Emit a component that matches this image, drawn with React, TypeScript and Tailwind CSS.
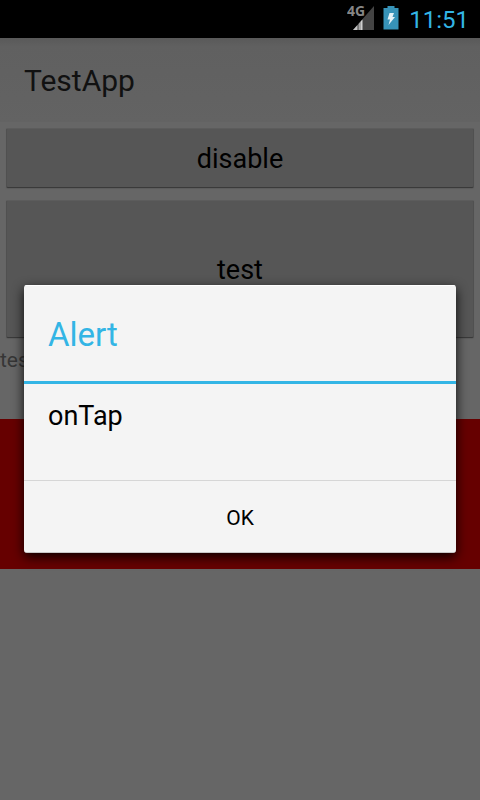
import { useState } from "react";

function SignalIcon() {
  return (
    <svg className="h-7 w-7" viewBox="0 -4 28 28" role="img" aria-label="4G signal">
      <path d="M27 0V24H6Z" fill="#444444" />
      <path d="M6 24 10.500 19V24Z" fill="#c4c4c4" />
      <path d="M11.500 18 14 15V24H11.500Z" fill="#a5a5a5" />
      <path d="M14 15 15.500 13.500V24H14Z" fill="#d0d0d0" />
      <text
        x="0"
        y="10"
        fontSize="14"
        fontWeight="700"
        fill="#868686"
        className="font-['Liberation_Sans_Narrow','Open_Sans',sans-serif]"
      >
        4G
      </text>
    </svg>
  );
}

function BatteryIcon() {
  return (
    <svg className="h-6 w-4" viewBox="0 0 16 24" role="img" aria-label="Battery charging">
      <path d="M4.500 0H11.500V2H15.500V23.500H0.500V2H4.500Z" fill="#3793b8" />
      <path d="M6.500 7H11L9.500 11H12L5.500 19L7 13.500H4.500Z" fill="#e4f2f7" />
    </svg>
  );
}

function StatusBar() {
  return (
    <div className="flex h-[38px] items-center justify-end gap-2 bg-black pr-[11px]">
      <div className="flex items-end gap-2 pb-1.5">
        <SignalIcon />
        <BatteryIcon />
      </div>
      <time className="pl-0.5 pt-0.5 text-2xl text-[#33b5e5]">11:51</time>
    </div>
  );
}

const buttonClass =
  "block w-full rounded-xs border border-t-[#5c5c5c] border-x-[#505050] border-b-[#3a3a3a] bg-[#565656] pt-0.5 text-[27px] leading-8 text-black shadow-[0_1px_1px_#5c5c5c]";

export default function App() {
  const [open, setOpen] = useState(true);

  return (
    <div className="relative flex min-h-screen flex-col bg-[#666666] font-['Roboto',sans-serif]">
      <StatusBar />
      <header className="flex h-[84px] items-center bg-linear-to-b from-[#595959] via-[#606060] via-10% to-[#636363] px-6 pt-0.5">
        <h1 className="text-[30px] leading-9 text-[#111111]">TestApp</h1>
      </header>
      <main>
        <div className="flex flex-col gap-3 px-1.5 pt-1.5">
          <button type="button" className={`${buttonClass} h-[60px]`}>
            disable
          </button>
          <button type="button" className={`${buttonClass} h-[138px]`}>
            test
          </button>
        </div>
        <p className="mt-2 h-[73px] text-[21px] leading-7 text-[#363636]">test</p>
        <div className="h-[150px] bg-[#660000]" />
      </main>

      {open && (
        <div className="absolute inset-x-0 top-[38px] bottom-0 flex items-center px-6">
          <div
            role="alertdialog"
            aria-modal="true"
            aria-labelledby="alert-title"
            aria-describedby="alert-message"
            className="w-full overflow-hidden rounded-[3px] border-b border-[#c8c8c8] bg-[#f4f4f4] shadow-[0_4px_12px_rgba(0,0,0,0.9)]"
          >
            <h2
              id="alert-title"
              className="flex h-24 items-center border-t border-white px-6 pt-0.5 text-[33px] leading-10 text-[#33b5e5]"
            >
              Alert
            </h2>
            <p
              id="alert-message"
              className="h-[99px] border-t-[3px] border-[#33b5e5] px-6 pt-4 text-[27px] leading-8 text-black"
            >
              onTap
            </p>
            <button
              type="button"
              onClick={() => setOpen(false)}
              className="block h-[72px] w-full border-t border-[#d6d6d6] pt-0.5 text-[21px] leading-7 text-black"
            >
              OK
            </button>
          </div>
        </div>
      )}
    </div>
  );
}
